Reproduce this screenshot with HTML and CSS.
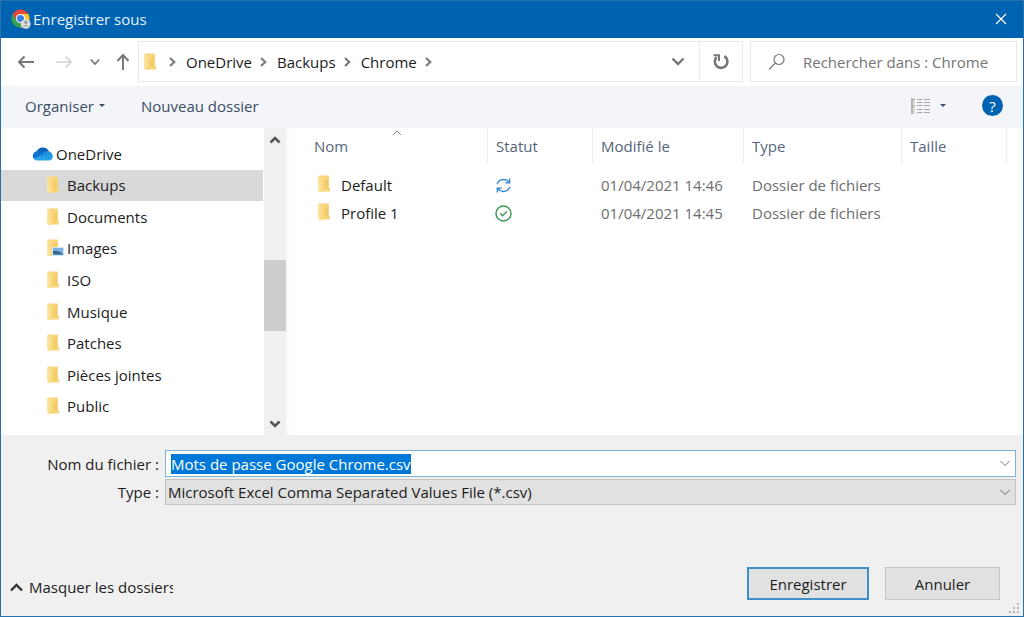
FILE: index.html
```html
<!DOCTYPE html>
<html lang="fr">
<head>
<meta charset="utf-8">
<title>Enregistrer sous</title>
<link rel="stylesheet" href="styles.css">
</head>
<body>
<svg class="defs" aria-hidden="true">
  <defs>
    <linearGradient id="fold" x1="0" y1="0" x2="1" y2="0">
      <stop offset="0" stop-color="#fbe6a8"/>
      <stop offset="1" stop-color="#f9d97f"/>
    </linearGradient>
    <linearGradient id="cloud" x1="0" y1="0" x2="0" y2="1">
      <stop offset="0" stop-color="#1b8fe0"/>
      <stop offset="1" stop-color="#2aa6ea"/>
    </linearGradient>
  </defs>
  <symbol id="folder" viewBox="0 0 14 18">
    <path d="M2 0.5H12V12.5L13 13V16.5H2Z" fill="#f8d67c"/>
    <path d="M7.5 5.5L11 3V13L7.5 15Z" fill="#f4cb68"/>
    <path d="M1 1L5.5 2.5V17.6L1 16Z" fill="url(#fold)"/>
  </symbol>
</svg>
<main class="window">
  <header class="titlebar">
    <svg class="logo" viewBox="0 0 20 20" aria-hidden="true">
      <path d="M9.5 9.5V5H17.3A9 9 0 0 1 9.5 18.5Z" fill="#fbc72f"/>
      <path d="M9.5 9.5L9.5 18.5A9 9 0 0 1 1.7 5Z" fill="#35a350"/>
      <path d="M1.7 5A9 9 0 0 1 17.3 5H9.5L5.6 11.7Z" fill="#e2453a"/>
      <circle cx="9.5" cy="9.5" r="4.6" fill="#fff"/>
      <circle cx="9.5" cy="9.5" r="3.6" fill="#3f7fe8"/>
      <circle cx="14.8" cy="15" r="4.8" fill="#dcdfe0"/>
      <circle cx="14.8" cy="13.3" r="1.7" fill="#9aa09f"/>
      <path d="M11.6 17.6Q14.8 13.8 18 17.6Z" fill="#aaa68f"/>
    </svg>
    <h1 class="title">Enregistrer sous</h1>
    <button class="close" type="button" aria-label="Fermer">
      <svg width="12" height="12" viewBox="0 0 12 12"><path d="M1 1L11 11M11 1L1 11" stroke="#fff" stroke-width="1.2"/></svg>
    </button>
  </header>

  <nav class="navbar" aria-label="Navigation">
    <div class="history">
      <button type="button" aria-label="Précédent"><svg width="18" height="14" viewBox="0 0 18 14"><path d="M17 7H2M7.5 1.5L2 7L7.5 12.5" fill="none" stroke="#767676" stroke-width="2"/></svg></button>
      <button type="button" aria-label="Suivant" disabled><svg width="18" height="14" viewBox="0 0 18 14"><path d="M1 7H15.5M10.5 1.5L16 7L10.5 12.5" fill="none" stroke="#d2d2d2" stroke-width="1.6"/></svg></button>
      <button class="recent" type="button" aria-label="Emplacements récents"><svg width="10" height="8" viewBox="0 0 10 8"><path d="M0.8 1.5L5 6L9.2 1.5" fill="none" stroke="#767676" stroke-width="1.7"/></svg></button>
      <button class="up" type="button" aria-label="Dossier parent"><svg width="14" height="18" viewBox="0 0 14 18"><path d="M7 17V2M1.5 8L7 2L12.5 8" fill="none" stroke="#767676" stroke-width="1.9"/></svg></button>
    </div>
    <div class="address">
      <svg class="folder" aria-hidden="true"><use href="#folder"/></svg>
      <svg class="sep" viewBox="0 0 7 10"><path d="M1 1L5.3 5L1 9"/></svg>
      <a href="#">OneDrive</a>
      <svg class="sep" viewBox="0 0 7 10"><path d="M1 1L5.3 5L1 9"/></svg>
      <a href="#">Backups</a>
      <svg class="sep" viewBox="0 0 7 10"><path d="M1 1L5.3 5L1 9"/></svg>
      <a href="#">Chrome</a>
      <svg class="sep" viewBox="0 0 7 10"><path d="M1 1L5.3 5L1 9"/></svg>
      <button class="drop" type="button" aria-label="Emplacements précédents"><svg width="14" height="9" viewBox="0 0 14 9"><path d="M1.5 1.5L7 7L12.5 1.5" fill="none" stroke="#767676" stroke-width="2.4"/></svg></button>
      <button class="refresh" type="button" aria-label="Actualiser"><svg width="18" height="18" viewBox="0 0 18 18"><path d="M12.4 3.2A6.3 6.3 0 1 1 4.6 4.2" fill="none" stroke="#767676" stroke-width="2.6"/><path d="M1.5 2.2H7V8" fill="none" stroke="#767676" stroke-width="2"/></svg></button>
    </div>
    <div class="search">
      <svg width="18" height="18" viewBox="0 0 18 18" aria-hidden="true"><circle cx="11" cy="6.5" r="5" fill="none" stroke="#7b7b7b" stroke-width="1.2"/><path d="M7.5 10L1 16.5" stroke="#7b7b7b" stroke-width="1.3"/></svg>
      <input type="search" placeholder="Rechercher dans : Chrome" aria-label="Rechercher dans : Chrome">
    </div>
  </nav>

  <div class="toolbar">
    <button type="button">Organiser <span class="caret"></span></button>
    <button class="new" type="button">Nouveau dossier</button>
    <button class="view" type="button" aria-label="Affichage">
      <svg width="20" height="16" viewBox="0 0 20 16">
        <path d="M1 0V16" stroke="#b4b4b4" stroke-width="2"/>
        <path d="M3 0V16" stroke="#dedede" stroke-width="2"/>
        <path d="M2 1.5H4M2 8H4" stroke="#d29a76"/>
        <path d="M6 1.5H11.5M6 4.5H11.5M6 7.5H11.5M6 11.500H11.5M6 14.5H11.5M13 1.5H19M13 4.5H19M13 7.5H19M13 11.500H19M13 14.5H19" stroke="#a6a8ab"/>
      </svg>
      <span class="caret"></span>
    </button>
    <button class="help" type="button" aria-label="Aide">?</button>
  </div>

  <div class="content">
    <aside class="sidebar">
      <ul class="tree">
        <li class="root"><svg class="onedrive" viewBox="0 0 22 15" aria-hidden="true"><path d="M4.5 6A6.5 6 0 0 1 16.5 4.5L9 9Z" fill="#0f62b8"/><path d="M4.5 5.3A4.5 4.6 0 0 0 2 13L13 9L8 5.8Q6.5 5 4.5 5.3Z" fill="#1173d0"/><path d="M10 7L14.5 4.6A5 5 0 0 1 18.5 6.5L20 11Z" fill="#1582d6"/><path d="M1.5 12.6L11.5 8Q13 6.8 15.5 6.2A4.3 4.3 0 0 1 17.7 14.5H5Q2.8 14.5 1.5 12.6Z" fill="url(#cloud)"/></svg>OneDrive</li>
        <li class="selected"><svg class="folder" aria-hidden="true"><use href="#folder"/></svg>Backups</li>
        <li><svg class="folder" aria-hidden="true"><use href="#folder"/></svg>Documents</li>
        <li><span class="pictures"><svg class="folder" aria-hidden="true"><use href="#folder"/></svg><svg class="photo" viewBox="0 0 12 9" aria-hidden="true"><path d="M0 0H12V9H0Z" fill="#d4e5f5"/><path d="M1 1H11V5H1Z" fill="#78ade6"/><path d="M1 4L5 4L11 6V8H1Z" fill="#2f6675"/><path d="M1 6.5H11V8H1Z" fill="#4b86c4"/></svg></span>Images</li>
        <li><svg class="folder" aria-hidden="true"><use href="#folder"/></svg>ISO</li>
        <li><svg class="folder" aria-hidden="true"><use href="#folder"/></svg>Musique</li>
        <li><svg class="folder" aria-hidden="true"><use href="#folder"/></svg>Patches</li>
        <li><svg class="folder" aria-hidden="true"><use href="#folder"/></svg>Pièces jointes</li>
        <li><svg class="folder" aria-hidden="true"><use href="#folder"/></svg>Public</li>
      </ul>
      <div class="scrollbar">
        <button type="button" aria-label="Défiler vers le haut"><svg width="12" height="9" viewBox="0 0 12 9"><path d="M1.500 7.500L6 3L10.500 7.500" fill="none" stroke="#555" stroke-width="2.6"/></svg></button>
        <div class="track"><div class="thumb"></div></div>
        <button type="button" aria-label="Défiler vers le bas"><svg width="12" height="9" viewBox="0 0 12 9"><path d="M1.500 1.500L6 6L10.500 1.500" fill="none" stroke="#555" stroke-width="2.6"/></svg></button>
      </div>
    </aside>
    <section class="files">
      <table>
        <colgroup><col class="c-name"><col class="c-status"><col class="c-date"><col class="c-type"><col class="c-size"><col></colgroup>
        <thead>
          <tr>
            <th aria-sort="ascending">Nom<svg class="sort" viewBox="0 0 10 6"><path d="M1 5L5 1L9 5" fill="none" stroke="#8a8a8a"/></svg></th>
            <th>Statut</th><th>Modifié le</th><th>Type</th><th>Taille</th><td></td>
          </tr>
        </thead>
        <tbody>
          <tr>
            <td class="name"><svg class="folder" aria-hidden="true"><use href="#folder"/></svg>Default</td>
            <td><svg class="state" viewBox="0 0 18 18"><path d="M2.3 7.5A7 6.5 0 0 1 14.8 5.5M15.7 10.5A7 6.5 0 0 1 3.2 12.5M15.5 1.5V6.2H10.8M2.5 16.5V11.8H7.2" fill="none" stroke="#2f86cf" stroke-width="1.5"/></svg></td>
            <td>01/04/2021 14:46</td><td>Dossier de fichiers</td><td></td><td></td>
          </tr>
          <tr>
            <td class="name"><svg class="folder" aria-hidden="true"><use href="#folder"/></svg>Profile 1</td>
            <td><svg class="state" viewBox="0 0 18 18"><circle cx="9" cy="9" r="8" fill="none" stroke="#3b9a52" stroke-width="1.5"/><path d="M5.5 9L8 11.5L12.5 6.8" fill="none" stroke="#3b9a52" stroke-width="1.5"/></svg></td>
            <td>01/04/2021 14:45</td><td>Dossier de fichiers</td><td></td><td></td>
          </tr>
        </tbody>
      </table>
    </section>
  </div>

  <footer class="footer">
    <form class="fields">
      <label for="filename">Nom du fichier :</label>
      <div class="combo">
        <input id="filename" type="text" value="Mots de passe Google Chrome.csv" autocomplete="off" spellcheck="false">
        <button type="button" aria-label="Noms récents"><svg width="10" height="7" viewBox="0 0 10 7"><path d="M0.5 1L5 5.5L9.5 1" fill="none" stroke="#777"/></svg></button>
      </div>
      <label for="filetype">Type :</label>
      <div class="choice">
        <select id="filetype"><option>Microsoft Excel Comma Separated Values File (*.csv)</option></select>
        <svg class="arrow" width="10" height="7" viewBox="0 0 10 7" aria-hidden="true"><path d="M0.5 1L5 5.5L9.5 1" fill="none" stroke="#666"/></svg>
      </div>
    </form>
    <div class="actions">
      <button class="toggle" type="button"><svg width="13" height="9" viewBox="0 0 13 9"><path d="M1 7.5L6.5 2L12 7.5" fill="none" stroke="#333" stroke-width="2.4"/></svg><span>Masquer les dossiers</span></button>
      <button class="btn primary" type="button">Enregistrer</button>
      <button class="btn" type="button">Annuler</button>
    </div>
    <svg class="grip" width="10" height="10" viewBox="0 0 10 10" aria-hidden="true"><path d="M8 0h2v2h-2zM4 4h2v2h-2zM8 4h2v2h-2zM0 8h2v2h-2zM4 8h2v2h-2zM8 8h2v2h-2z" fill="#b5b5b5"/></svg>
  </footer>
</main>
<script src="script.js"></script>
</body>
</html>
```

FILE: styles.css
```css
* { box-sizing: border-box; }

body {
  margin: 0;
  font: 15px/20px "Open Sans", "Noto Sans", sans-serif;
  color: #1c1c1c;
}

button, input, select {
  font: inherit;
  color: inherit;
  margin: 0;
  padding: 0;
  border: 0;
  background: none;
  border-radius: 0;
}

button { display: flex; align-items: center; justify-content: center; }
svg { display: block; flex: none; }
.defs { position: absolute; width: 0; height: 0; }
.folder { width: 14px; height: 18px; }

.window {
  display: flex;
  flex-direction: column;
  min-height: 100vh;
  border: 1px solid #2672ac;
  background: #fff;
}

/* Title bar */
.titlebar {
  display: flex;
  align-items: center;
  height: 37px;
  padding: 0 0 2px 10px;
  background: #0063b1;
  color: #e6f1fa;
}
.logo { width: 20px; height: 20px; }
.title { flex: 1; margin: 0 0 0 2px; font-size: 15px; line-height: 20px; font-weight: 400; }
.close { width: 45px; height: 35px; }

/* Navigation */
.navbar { display: flex; gap: 7px; height: 48px; padding: 3px 6px 4px 0; }
.history { display: flex; align-items: center; width: 130px; padding-left: 16px; }
.history button { width: 18px; height: 30px; margin-right: 20px; }
.history .recent { width: 10px; margin: 0 16px 0 -3px; }
.history .up { width: 14px; margin: 0; }
.address, .search { display: flex; align-items: center; border: 1px solid #dfeaf2; }
.address { flex: 1; padding-left: 4px; }
.address a { margin: 0 8px 0 10px; color: inherit; text-decoration: none; }
.address .folder { margin-right: 12px; }
.sep { width: 7px; height: 10px; }
.sep path { fill: none; stroke: #767676; stroke-width: 2; }
.drop { width: 42px; height: 100%; margin-left: auto; }
.refresh { width: 43px; height: 100%; border-left: 1px solid #dfeaf2; }
.search { flex: 0 1 267px; padding-left: 17px; gap: 17px; }
.search input { flex: 1; min-width: 0; outline: 0; appearance: none; }
.search input::placeholder { color: #747474; opacity: 1; }

/* Command bar */
.toolbar {
  display: flex;
  align-items: center;
  height: 42px;
  padding: 0 20px 3px 24px;
  background: #f3f5f8;
  color: #3b4d66;
}
.caret {
  margin-left: 5px;
  border: 3px solid transparent;
  border-top-color: #3b4d66;
  border-bottom: 0;
}
.new { margin-left: 36px; }
.view { margin-left: auto; }
.view .caret { margin-left: 9px; }
.help {
  width: 21px;
  height: 21px;
  margin-left: 36px;
  border-radius: 50%;
  background: #0063b1;
  color: #fff;
}

/* Folder tree */
.content { display: flex; flex: 1; }
.sidebar { display: flex; flex: 0 0 288px; border-right: 3px solid #fafafa; }
.tree {
  display: flex;
  flex: 1;
  flex-direction: column;
  margin: 0;
  padding: 10px 1px 13px 0;
  list-style: none;
}
.tree li { display: flex; flex: 1 0 0; align-items: center; gap: 7px; padding-left: 45px; }
.tree .root { gap: 2px; padding-left: 31px; }
.tree .selected { background: #d9d9d9; }
.onedrive { width: 22px; height: 15px; }
.pictures { position: relative; width: 14px; }
.photo { position: absolute; right: -4px; bottom: 1px; width: 12px; height: 9px; }

.scrollbar { display: flex; flex-direction: column; width: 22px; background: #f0f0f0; }
.scrollbar button { height: 22px; }
.track { flex: 1; display: grid; grid-template-rows: 110fr 71fr 82fr; }
.thumb { grid-row: 2; background: #cdcdcd; }

/* File list */
.files { flex: 1; min-width: 0; }
table { width: 100%; table-layout: fixed; border-collapse: separate; border-spacing: 0; }
.c-name { width: 199px; }
.c-status { width: 105px; }
.c-date { width: 151px; }
.c-type { width: 158px; }
.c-size { width: 105px; }
th, td { padding: 0 8px; text-align: left; font-weight: 400; white-space: nowrap; color: #6d6d6d; }
th { position: relative; height: 36px; border-right: 1px solid #ebeef1; color: #56657b; }
th:first-child { padding-left: 25px; }
.sort { position: absolute; top: 2px; left: 103px; width: 10px; height: 6px; }
tbody td { height: 28px; }
tbody::before { content: ""; display: block; height: 7px; }
.name { padding-left: 28px; color: #1c1c1c; }
.name .folder { float: left; margin: 0 10px 0 0; }
.state { width: 17px; height: 17px; margin-left: -1px; }

/* File name, type and actions */
.footer { position: relative; padding: 15px 7px 16px 0; background: #f0f0f0; }
.fields { display: grid; grid-template-columns: 164px 1fr; row-gap: 2px; align-items: center; }
.fields label { padding-right: 6px; text-align: right; }
.combo { display: flex; height: 27px; padding-left: 5px; border: 1px solid #7fb2d6; background: #fff; }
.combo input { flex: 1; min-width: 0; outline: 0; }
.combo input::selection { background: #0078d7; color: #fff; }
.combo button { width: 20px; }
.choice { display: grid; align-items: center; }
.choice select {
  grid-area: 1 / 1;
  width: 100%;
  height: 26px;
  padding: 0 24px 0 2px;
  border: 1px solid #c4c4c4;
  background: #e1e1e1;
  appearance: none;
}
.arrow { grid-area: 1 / 1; justify-self: end; margin-right: 6px; pointer-events: none; }

.actions { display: flex; align-items: center; gap: 16px; margin-top: 62px; padding-right: 16px; }
.toggle { gap: 6px; width: 163px; margin: 7px auto 0 9px; justify-content: flex-start; }
.toggle span { overflow: hidden; white-space: nowrap; }
.btn { min-width: 115px; height: 33px; padding: 0 12px; border: 1px solid #c6c6c6; background: #e1e1e1; }
.primary { min-width: 122px; border: 2px solid #3f8fc8; }
.grip { position: absolute; right: 4px; bottom: 3px; }
```

FILE: script.js
```js
const filename = document.getElementById("filename");
filename.focus();
filename.select();
```
